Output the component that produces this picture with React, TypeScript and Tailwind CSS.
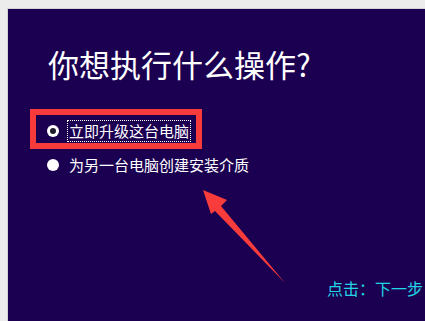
import React from 'react';

const Radio: React.FC<{ checked?: boolean }> = ({ checked }) => (
  <span className="flex h-[12px] w-[12px] shrink-0 items-center justify-center rounded-full bg-white">
    {checked && <span className="h-[6px] w-[6px] rounded-full bg-[#1c1c2c]" />}
  </span>
);

const App: React.FC = () => {
  return (
    <div className="relative h-[321px] w-[425px] overflow-hidden bg-[#ececec] pl-[7px] pt-[8px]">
      <div
        className="flex h-full flex-col border-l border-t border-[#d2d2d2] bg-[#1b0052] text-white"
        style={{ fontFamily: '"Noto Sans CJK SC", "Noto Sans", sans-serif' }}
      >
        <h1 className="ml-[40px] mt-[39px] text-[31px] leading-[31px] font-normal whitespace-nowrap">
          你想执行什么操作?
        </h1>

        <div className="ml-[22px] mt-[30px] flex flex-col">
          <div className="flex h-[40px] w-[172px] items-center border-[6px] border-[#f73b3b] pl-[11px] pt-[3px]">
            <Radio checked />
            <span className="ml-[8px] border border-dotted border-white px-[1px] text-[15px] leading-[20px] whitespace-nowrap">
              立即升级这台电脑
            </span>
          </div>
          <div className="mt-[6px] flex h-[20px] items-center pl-[17px]">
            <Radio />
            <span className="ml-[10px] text-[15px] leading-[20px] whitespace-nowrap">
              为另一台电脑创建安装介质
            </span>
          </div>
        </div>

        <div className="ml-[319px] mt-[105px] text-[16px] leading-[16px] text-[#22d6e4] whitespace-nowrap">
          点击：下一步
        </div>
      </div>

      <svg className="pointer-events-none absolute left-0 top-0" width="425" height="321" viewBox="0 0 425 321">
        <polygon points="203,190 227,200 221,206 285,283 215,211 211,214" fill="#f83c3c" />
      </svg>
    </div>
  );
};

export default App;
